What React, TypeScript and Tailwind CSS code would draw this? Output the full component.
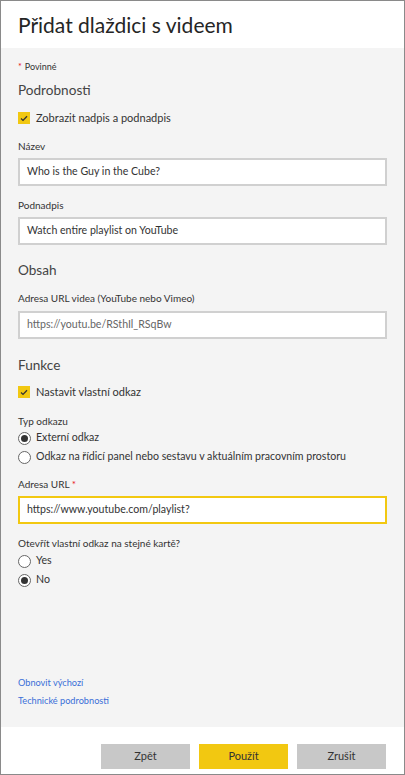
import React from "react";

const font = { fontFamily: 'Lato, "Open Sans", sans-serif' };

function Check({ label }: { label: string }) {
  return (
    <div className="flex items-center h-[16px]">
      <div className="w-[12px] h-[12px] bg-[#f2c811] flex items-center justify-center">
        <svg width="8" height="7" viewBox="0 0 8 7">
          <path d="M1 3.6 L3 5.4 L7 1.2" fill="none" stroke="#333" strokeWidth="1.3" />
        </svg>
      </div>
      <span className="ml-[6px] text-[11px] text-[#333]">{label}</span>
    </div>
  );
}

function Radio({ label, checked }: { label: string; checked?: boolean }) {
  return (
    <div className="flex items-center h-[16px]">
      <div className="w-[13px] h-[13px] rounded-full border border-[#666] bg-white flex items-center justify-center">
        {checked && <div className="w-[7px] h-[7px] rounded-full bg-[#333]" />}
      </div>
      <span className="ml-[5px] text-[10.6px] text-[#333]">{label}</span>
    </div>
  );
}

function Label({ children }: { children: React.ReactNode }) {
  return <div className="h-[14px] leading-[14px] text-[10px] text-[#333]">{children}</div>;
}

function Section({ children }: { children: React.ReactNode }) {
  return <div className="h-[20px] leading-[20px] text-[13.6px] text-[#444]">{children}</div>;
}

function Input({ value, focus, muted }: { value: string; focus?: boolean; muted?: boolean }) {
  return (
    <div
      className={
        "h-[28px] bg-white flex items-center px-[7px] text-[10.6px] border-2 " +
        (focus ? "border-[#f2c811] " : "border-[#d0d0d0] ") +
        (muted ? "text-[#666]" : "text-[#333]")
      }
    >
      {value}
    </div>
  );
}

export default function App() {
  return (
    <div style={font} className="w-[405px] h-[775px] border border-[#8a8a8a] flex flex-col bg-white">
      <div className="h-[47px] shrink-0 flex items-center pl-[17px] text-[21px] text-[#252525]">
        Přidat dlaždici s videem
      </div>
      <div className="flex-1 bg-[#f4f4f4] px-[17px] pt-[12px] flex flex-col">
        <div className="h-[14px] leading-[14px] text-[9px] text-[#333]">
          <span className="text-[#e81123] mr-[3px]">*</span>Povinné
        </div>
        <div className="mt-[6px]">
          <Section>Podrobnosti</Section>
        </div>
        <div className="mt-[10px]">
          <Check label="Zobrazit nadpis a podnadpis" />
        </div>
        <div className="mt-[13px]">
          <Label>Název</Label>
        </div>
        <div className="mt-[5px]">
          <Input value="Who is the Guy in the Cube?" />
        </div>
        <div className="mt-[12px]">
          <Label>Podnadpis</Label>
        </div>
        <div className="mt-[5px]">
          <Input value="Watch entire playlist on YouTube" />
        </div>
        <div className="mt-[15px]">
          <Section>Obsah</Section>
        </div>
        <div className="mt-[11px]">
          <Label>Adresa URL videa (YouTube nebo Vimeo)</Label>
        </div>
        <div className="mt-[6px]">
          <Input value="https://youtu.be/RSthIl_RSqBw" muted />
        </div>
        <div className="mt-[16px]">
          <Section>Funkce</Section>
        </div>
        <div className="mt-[9px]">
          <Check label="Nastavit vlastní odkaz" />
        </div>
        <div className="mt-[14px]">
          <Label>Typ odkazu</Label>
        </div>
        <div className="mt-[2px]">
          <Radio label="Externí odkaz" checked />
        </div>
        <div className="mt-[3px]">
          <Radio label="Odkaz na řídicí panel nebo sestavu v aktuálním pracovním prostoru" />
        </div>
        <div className="mt-[12px]">
          <Label>
            Adresa URL <span className="text-[#e81123]">*</span>
          </Label>
        </div>
        <div className="mt-[5px]">
          <Input value="https://www.youtube.com/playlist?" focus />
        </div>
        <div className="mt-[12px]">
          <Label>Otevřít vlastní odkaz na stejné kartě?</Label>
        </div>
        <div className="mt-[3px]">
          <Radio label="Yes" />
        </div>
        <div className="mt-[3px]">
          <Radio label="No" checked />
        </div>
        <div className="mt-[88px] h-[14px] leading-[14px] text-[9.2px] text-[#3a6fd8]">Obnovit výchozí</div>
        <div className="mt-[4px] h-[14px] leading-[14px] text-[9.2px] text-[#3a6fd8]">Technické podrobnosti</div>
      </div>
      <div className="h-[47px] shrink-0 bg-white flex justify-end items-start pt-[17px] pr-[18px] gap-[9px]">
        <div className="w-[89px] h-[25px] bg-[#c8c8c8] flex items-center justify-center text-[11px] text-[#333]">Zpět</div>
        <div className="w-[89px] h-[25px] bg-[#f2c811] flex items-center justify-center text-[11px] text-[#333]">Použít</div>
        <div className="w-[89px] h-[25px] bg-[#c8c8c8] flex items-center justify-center text-[11px] text-[#333]">Zrušit</div>
      </div>
    </div>
  );
}
